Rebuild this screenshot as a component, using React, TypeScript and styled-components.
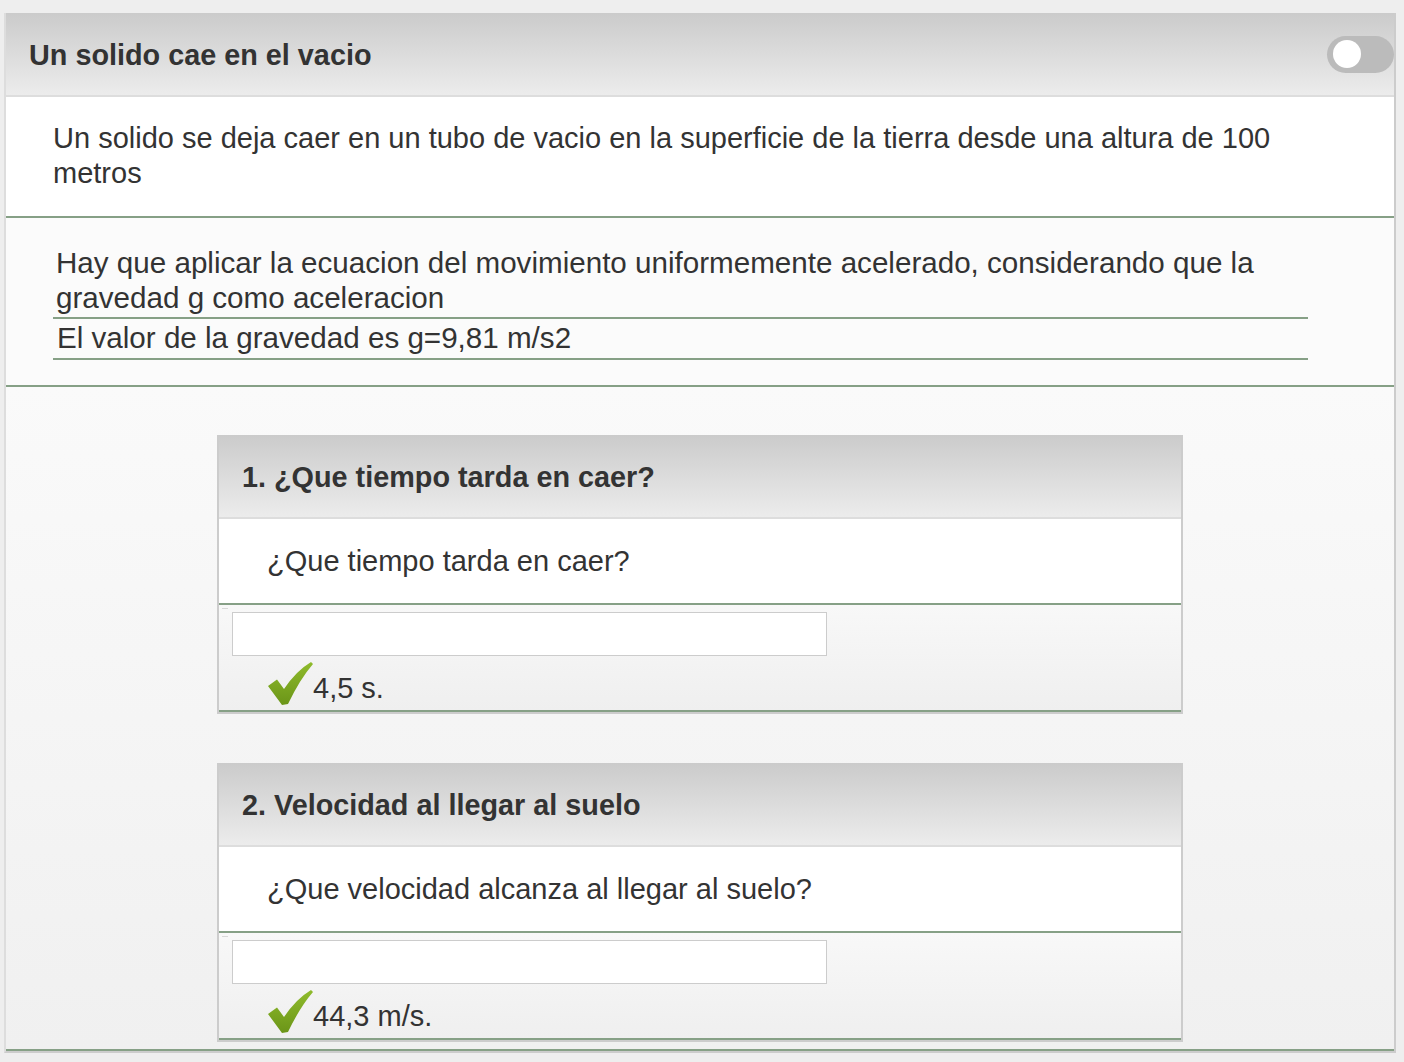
import styled, { createGlobalStyle } from 'styled-components'

const GlobalStyle = createGlobalStyle`
	body {
		margin: 0;
		background: #eeeeee;
		font-family: 'Liberation Sans', Arial, Helvetica, sans-serif;
		color: #333333;
	}
`

const questions = [
	{
		title: '1. ¿Que tiempo tarda en caer?',
		text: '¿Que tiempo tarda en caer?',
		answer: '4,5 s.',
	},
	{
		title: '2. Velocidad al llegar al suelo',
		text: '¿Que velocidad alcanza al llegar al suelo?',
		answer: '44,3 m/s.',
	},
]

const CheckMark = () => (
	<CheckIcon viewBox="0 0 45 43" width="45" height="43">
		<defs>
			<linearGradient id="chk" x1="0" y1="0" x2="0" y2="1">
				<stop offset="0" stopColor="#8fbb2c" />
				<stop offset="1" stopColor="#6b9518" />
			</linearGradient>
		</defs>
		<path
			d="M0 24 L9 17.5 L16 27 Q28 9 43 0 L45 2 Q32 17 20 42 L14 43 Z"
			fill="url(#chk)"
		/>
	</CheckIcon>
)

const App = () => {
	return (
		<>
			<GlobalStyle />
			<Panel>
				<Header>
					<Title>Un solido cae en el vacio</Title>
					<Toggle>
						<Knob />
					</Toggle>
				</Header>
				<Statement>
					Un solido se deja caer en un tubo de vacio en la superficie de la tierra desde una altura de 100 metros
				</Statement>
				<Hints>
					<HintBox>
						<Hint>
							Hay que aplicar la ecuacion del movimiento uniformemente acelerado, considerando que la gravedad g como aceleracion
						</Hint>
						<Hint $short>El valor de la gravedad es g=9,81 m/s2</Hint>
					</HintBox>
				</Hints>
				<Questions>
					{questions.map((q) => (
						<Card key={q.title}>
							<CardHeader>
								<Title>{q.title}</Title>
							</CardHeader>
							<CardBody>{q.text}</CardBody>
							<AnswerArea>
								<Dash />
								<AnswerInput type="text" />
								<AnswerRow>
									<CheckMark />
									<AnswerText>{q.answer}</AnswerText>
								</AnswerRow>
							</AnswerArea>
						</Card>
					))}
				</Questions>
			</Panel>
		</>
	)
}

const Panel = styled.div`
	margin: 13px 0 0 4px;
	width: 1392px;
	box-sizing: border-box;
	border-left: 2px solid #dddddd;
	border-right: 2px solid #cccccc;
	border-bottom: 2px solid #cccccc;
`

const Header = styled.div`
	height: 82px;
	display: flex;
	align-items: center;
	justify-content: space-between;
	padding-left: 23px;
	background: linear-gradient(#cbcbcb, #ececec);
	border-bottom: 2px solid #dddddd;
`

const Title = styled.h1`
	margin: 3px 0 0;
	font-size: 28.8px;
	font-weight: bold;
	color: #333333;
`

const Toggle = styled.div`
	width: 67px;
	height: 37px;
	border-radius: 19px;
	background: #bbbbbb;
	display: flex;
	align-items: center;
	padding-left: 6px;
	box-sizing: border-box;
`

const Knob = styled.div`
	width: 28px;
	height: 28px;
	border-radius: 50%;
	background: #ffffff;
`

const Statement = styled.div`
	background: #ffffff;
	padding: 24px 80px 25px 47px;
	font-size: 29px;
	line-height: 35px;
	border-bottom: 2px solid #86a086;
`

const Hints = styled.div`
	background: #fbfbfb;
	padding: 27px 0 25px 47px;
	border-bottom: 2px solid #86a086;
`

const HintBox = styled.div`
	width: 1255px;
`

const Hint = styled.p<{ $short?: boolean }>`
	margin: 0;
	padding: ${(p) => (p.$short ? '1px 20px 3px 4px' : '0 20px 2px 3px')};
	font-size: 29.6px;
	line-height: 35px;
	border-bottom: 2px solid #86a086;
`

const Questions = styled.div`
	background: linear-gradient(#fafafa, #f0f0f0);
	padding: 48px 0 7px;
	display: flex;
	flex-direction: column;
	align-items: center;
	gap: 49px;
	border-bottom: 2px solid #86a086;
`

const Card = styled.div`
	width: 966px;
	box-sizing: border-box;
	border-left: 2px solid #cccccc;
	border-right: 2px solid #cccccc;
	border-bottom: 2px solid #cccccc;
`

const CardHeader = styled(Header)`
	padding-left: 23px;
`

const CardBody = styled.div`
	background: #ffffff;
	height: 84px;
	display: flex;
	align-items: center;
	padding-left: 48px;
	font-size: 29px;
	border-bottom: 2px solid #86a086;
`

const AnswerArea = styled.div`
	position: relative;
	height: 98px;
	background: linear-gradient(#f8f8f8, #efefef);
	border-bottom: 2px solid #86a086;
	padding: 7px 0 0 13px;
`

const Dash = styled.span`
	position: absolute;
	left: 3px;
	top: 3px;
	width: 6px;
	height: 1px;
	background: #d8d8d8;
`

const AnswerInput = styled.input`
	display: block;
	width: 595px;
	height: 44px;
	box-sizing: border-box;
	border: 1px solid #cccccc;
	background: #ffffff;
	margin: 0;
	outline: none;
`

const AnswerRow = styled.div`
	display: flex;
	align-items: flex-end;
	padding: 5px 0 0 36px;
	height: 49px;
	box-sizing: border-box;
`

const CheckIcon = styled.svg`
	display: block;
	flex: none;
`

const AnswerText = styled.span`
	font-size: 29px;
	line-height: 30px;
	padding-bottom: 2px;
`

export default App
